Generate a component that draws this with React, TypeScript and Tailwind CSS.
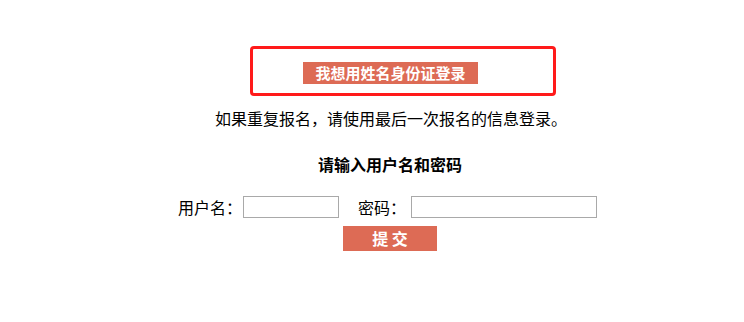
export default function App() {
  return (
    <div className="w-[744px] h-[322px] bg-white text-black font-['Noto_Sans_CJK_SC','Noto_Sans',sans-serif]">
      <div className="pt-[46px] pl-[250px]">
        <div className="w-[306px] h-[50px] border-[3px] border-[#ff1a1a] rounded-[4px]">
          <button
            type="button"
            className="mt-[13px] ml-[50px] w-[175px] h-[22px] bg-[#dd6b55] text-white font-bold text-[15px] leading-[22px]"
          >
            我想用姓名身份证登录
          </button>
        </div>
      </div>

      <p className="mt-[12px] pl-[215px] text-[16px] leading-[20px]">
        如果重复报名，请使用最后一次报名的信息登录。
      </p>

      <h3 className="mt-[26px] pl-[36px] text-center text-[16px] leading-[20px] font-bold">
        请输入用户名和密码
      </h3>

      <form className="mt-[22px] pl-[178px]" onSubmit={(e) => e.preventDefault()}>
        <div className="flex items-center h-[22px] text-[16px]">
          <label className="w-[65px]">用户名：</label>
          <input type="text" className="w-[96px] h-[22px] border border-[#a9a9a9] outline-none" />
          <label className="ml-[19px] w-[53px]">密码：</label>
          <input type="password" className="w-[186px] h-[22px] border border-[#a9a9a9] outline-none" />
        </div>
        <button
          type="submit"
          className="mt-[8px] ml-[165px] w-[94px] h-[25px] bg-[#dd6b55] text-white font-bold text-[16px] leading-[25px]"
        >
          提 交
        </button>
      </form>
    </div>
  );
}
